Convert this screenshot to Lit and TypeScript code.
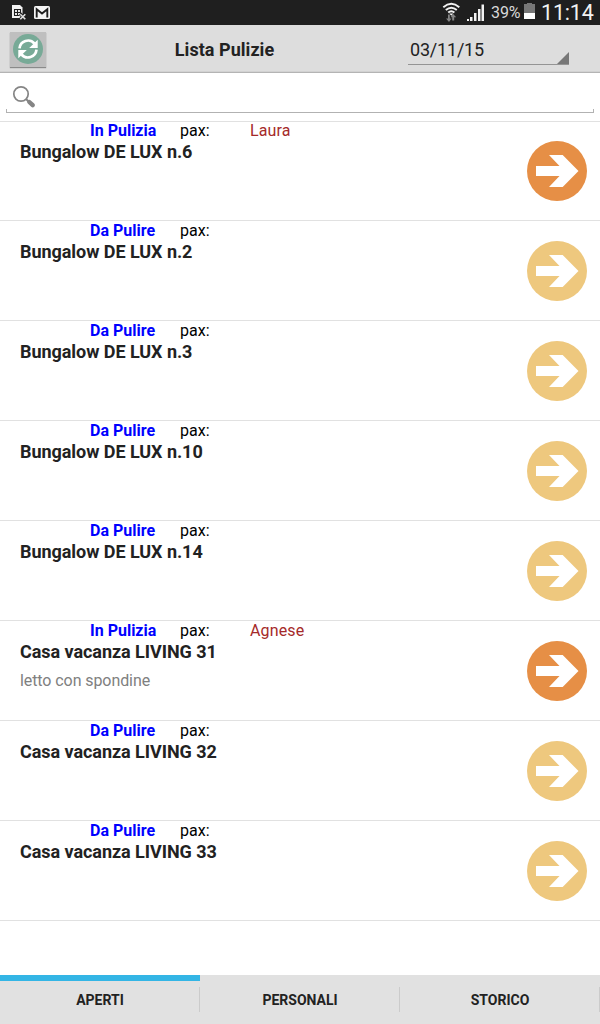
import { LitElement, html, css, svg, nothing } from "lit";
import { customElement, property } from "lit/decorators.js";

interface Cleaning {
  active: boolean;
  name: string;
  person?: string;
  note?: string;
}

const CLEANINGS: Cleaning[] = [
  { active: true, name: "Bungalow DE LUX n.6", person: "Laura" },
  { active: false, name: "Bungalow DE LUX n.2" },
  { active: false, name: "Bungalow DE LUX n.3" },
  { active: false, name: "Bungalow DE LUX n.10" },
  { active: false, name: "Bungalow DE LUX n.14" },
  { active: true, name: "Casa vacanza LIVING 31", person: "Agnese", note: "letto con spondine" },
  { active: false, name: "Casa vacanza LIVING 32" },
  { active: false, name: "Casa vacanza LIVING 33" },
];

@customElement("status-bar")
export class StatusBar extends LitElement {
  static styles = css`
    :host { display: flex; height: 25px; background: #1f1f1f; color: #f2f2f2; }
    svg { display: block; flex: none; }
    .left { width: 60px; }
    .space { flex: 1; }
    .pct { font-size: 16px; line-height: 26px; width: 32px; white-space: nowrap; letter-spacing: -0.1px; color: #d8d8d8; }
    .clock { font-size: 21.5px; line-height: 25px; width: 59px; white-space: nowrap; letter-spacing: -0.2px; }
  `;
  render() {
    return html`
      <svg class="left" width="60" height="25" viewBox="0 0 60 25">
        <path d="M12 5h8l2.500 2.500V17l-2 1H12z" fill="#f2f2f2" />
        <path d="M14 9.500h7M14 12.500h7M14 15.500h5M14.500 9.500v6M17.500 9.500v6M20.500 9.500v4" stroke="#1f1f1f" stroke-width="1.100" fill="none" />
        <path d="M20 13.700l6 6M26 13.700l-6 6" stroke="#1f1f1f" stroke-width="3.400" />
        <path d="M20.300 14.200l5 5M25.300 14.200l-5 5" stroke="#e0e0e0" stroke-width="1.600" />
        <rect x="34" y="6" width="16" height="13" rx="1.500" fill="#f5f5f5" />
        <path d="M36.700 17.500V9.200L42 13.600l5.300-4.400v8.300" stroke="#1f1f1f" stroke-width="1.900" fill="none" />
      </svg>
      <span class="space"></span>
      <svg width="51" height="25" viewBox="440 0 51 25">
        <g fill="none" stroke="#f2f2f2" stroke-width="1.900">
          <path d="M443.300 7.200q8-6.800 16 0M445.800 10q5.500-4.600 11 0M448.200 12.600q3.100-2.600 6.200 0" />
        </g>
        <path d="M449.300 13.500h4l-2 2.300z" fill="#f2f2f2" />
        <path d="M448 14.500v4h-2l3 3.500 2.500-3.500h-1.700v-4zM452.200 20.500v-3.300h-1.700l2.700-3.200 3 3.200h-2v3.300z" fill="#858585" />
        <path d="M467 19h2v2h-2zM470 17h2.500v4H470zM474 13h2.500v8H474zM478 9h2.500v12H478zM481.500 4.500h2.500V21h-2.500z" fill="#f2f2f2" />
      </svg>
      <span class="pct">39%</span>
      <svg width="18" height="25" viewBox="0 0 18 25">
        <path d="M4 3h5v1h3v9H1V4h3z" fill="#777" />
        <path d="M1 13h11v6H1z" fill="#fff" />
      </svg>
      <span class="clock">11:14</span>
    `;
  }
}

@customElement("page-header")
export class PageHeader extends LitElement {
  static styles = css`
    :host { display: flex; height: 48px; box-sizing: border-box; background: #ddd; border-bottom: 1px solid #b4b4b4; box-shadow: inset 0 -1px #d2d2d2; }
    .refresh { width: 36px; height: 35px; margin: 7px 0 0 10px; padding: 0; border: 0; background: #bfbfbf; box-shadow: 0 1px 1px #8a8a8a; display: block; }
    svg { display: block; }
    .title { width: 357px; text-align: center; font-size: 18px; font-weight: 700; line-height: 50px; letter-spacing: 0.04px; color: #222; }
    .date { width: 161px; height: 40px; box-sizing: border-box; margin-left: 5px; padding-left: 2px; border-bottom: 1px solid #949494; display: flex; justify-content: space-between; align-items: flex-end; font-size: 18px; line-height: 28px; letter-spacing: -0.2px; color: #222; }
    .arrow { width: 12px; height: 12px; background: #777; clip-path: polygon(100% 0, 100% 100%, 0 100%); }
  `;
  render() {
    return html`
      <button class="refresh" aria-label="Aggiorna">
        <svg width="36" height="35" viewBox="10 32 36 35">
          <circle cx="28" cy="49" r="15" fill="#78aa97" />
          <g fill="none" stroke="#fff" stroke-width="2.700">
            <path d="M19.500 48.300A8.600 8.600 0 0 1 34.500 43.500M36.500 49.700A8.600 8.600 0 0 1 21.500 54.500" />
          </g>
          <path d="M37.700 39.800V48h-8.500zM18.300 58.200V50h8.500z" fill="#fff" />
        </svg>
      </button>
      <span class="title">Lista Pulizie</span>
      <span class="date"><span>03/11/15</span><i class="arrow"></i></span>
    `;
  }
}

@customElement("search-field")
export class SearchField extends LitElement {
  static styles = css`
    :host { display: block; height: 48px; box-sizing: border-box; padding: 8px 6px 0; }
    .field { display: grid; grid-template-columns: 1fr; height: 32px; }
    .frame { height: 4px; align-self: end; box-sizing: border-box; border: 1px solid #b2b2b2; border-top: 0; }
    .frame, svg { grid-area: 1 / 1; }
    svg { display: block; }
  `;
  render() {
    return html`<div class="field">
      <svg width="34" height="30" viewBox="6 81 34 30">
        <circle cx="21" cy="94" r="7.200" fill="none" stroke="#858585" stroke-width="1.700" />
        <path d="M26 99l2.500 2.500" stroke="#858585" stroke-width="2" />
        <path d="M29.300 102l3.400 3.200" stroke="#858585" stroke-width="4.400" stroke-linecap="round" />
      </svg>
      <div class="frame"></div>
    </div>`;
  }
}

@customElement("cleaning-row")
export class CleaningRow extends LitElement {
  @property({ attribute: false }) item!: Cleaning;
  static styles = css`
    :host { display: flex; height: 100px; box-sizing: border-box; border-bottom: 1px solid #e1e1e1; padding: 0 13px 0 20px; }
    .text { flex: 1; }
    .meta { display: grid; grid-template-columns: 90px 70px 1fr; padding-left: 70px; font-size: 16px; line-height: 19px; color: #000; }
    .state { color: #00f; font-weight: 700; }
    .person { color: #a52a2a; letter-spacing: 0.15px; }
    .name { font-size: 18px; line-height: 24px; font-weight: 700; letter-spacing: -0.05px; color: #222; white-space: nowrap; }
    .note { font-size: 16px; line-height: 20px; letter-spacing: -0.08px; color: #808080; margin-top: 7px; }
    svg { display: block; margin-top: 20px; flex: none; }
  `;
  render() {
    const { active, name, person, note } = this.item;
    return html`
      <div class="text">
        <div class="meta">
          <span class="state">${active ? "In Pulizia" : "Da Pulire"}</span>
          <span>pax:</span>
          <span class="person">${person ?? nothing}</span>
        </div>
        <div class="name">${name}</div>
        ${note ? html`<div class="note">${note}</div>` : nothing}
      </div>
      <svg width="60" height="60" viewBox="0 0 60 60">
        ${svg`<circle cx="30" cy="30" r="30" fill=${active ? "#e68f46" : "#eec87e"} />`}
        <path d="M9 25h23.500L22 14h13.700L51.500 30 35.700 46H22l10.500-11H9z" fill="#fff" />
      </svg>
    `;
  }
}

@customElement("tab-bar")
export class TabBar extends LitElement {
  static styles = css`
    :host { display: grid; grid-template-columns: repeat(3, 200px); height: 49px; background: #e1e1e1; }
    .tab { box-sizing: border-box; display: flex; align-items: center; border-top: 6px solid transparent; font-size: 14px; font-weight: 700; color: #222; }
    .active { border-top-color: #33b5e5; }
    .label { flex: 1; height: 25px; margin-bottom: 6px; padding-left: 1px; line-height: 26px; text-align: center; border-right: 1px solid #cbcbcb; }
  `;
  render() {
    return ["APERTI", "PERSONALI", "STORICO"].map(
      (label, i) => html`<div class="tab ${i === 0 ? "active" : ""}"><span class="label">${label}</span></div>`
    );
  }
}

@customElement("app-root")
export class AppRoot extends LitElement {
  static styles = css`
    :host { display: flex; flex-direction: column; width: 600px; height: 1024px; background: #fff; overflow: hidden; font-family: Roboto, "Noto Sans", sans-serif; }
    .list { flex: 1; box-shadow: inset 0 1px #e1e1e1; }
  `;
  render() {
    return html`
      <status-bar></status-bar>
      <page-header></page-header>
      <search-field></search-field>
      <div class="list">${CLEANINGS.map((item) => html`<cleaning-row .item=${item}></cleaning-row>`)}</div>
      <tab-bar></tab-bar>
    `;
  }
}
